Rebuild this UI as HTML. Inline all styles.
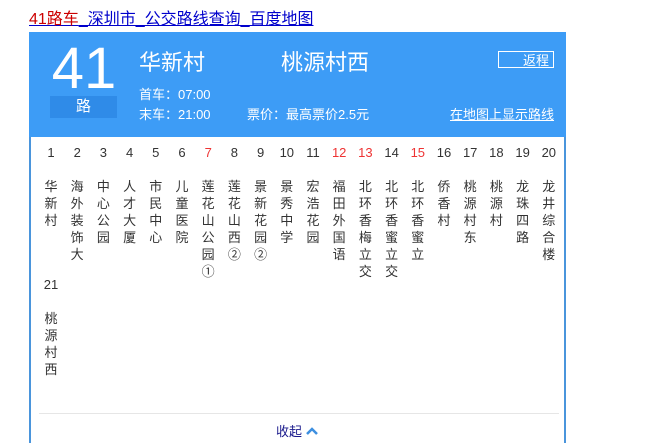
<!DOCTYPE html>
<html><head><meta charset="utf-8"><style>
html,body{margin:0;background:#fff;font-family:"Liberation Sans","Noto Sans CJK SC",sans-serif;width:669px;height:443px;overflow:hidden;position:relative}
.a{position:absolute}
.t{left:29px;top:5px;font-size:16px;text-decoration:underline;color:#00c}
.t span{color:#c00}
.panel{left:29px;top:32px;width:533px;height:411px;border:2px solid #4a95dc;border-top:none;border-bottom:none}
.hd{left:29px;top:32px;width:537px;height:105px;background:#3d9cf6;color:#fff}
.st{width:16px;font-size:13px;line-height:17px;color:#333;text-align:center}
</style></head><body>
<div class="a t"><span>41路车</span>_深圳市_公交路线查询_百度地图</div>
<div class="a panel"></div>
<div class="a hd">
 <div class="a" style="left:21px;top:2px;font-size:58px;line-height:70px;width:68px;text-align:center">41</div>
 <div class="a" style="left:21px;top:64px;width:67px;height:22px;background:#2f8be8;font-size:15px;text-align:center;line-height:22px">路</div>
 <div class="a" style="left:110px;top:13px;font-size:22px">华新村</div>
 <div class="a" style="left:252px;top:13px;font-size:22px">桃源村西</div>
 <div class="a" style="left:469px;top:19px;width:56px;height:17px;border:1px solid #fff;font-size:13px;text-align:right;line-height:17px;box-sizing:border-box;padding-right:4px">返程</div>
 <div class="a" style="left:110px;top:52px;font-size:13px">首车：07:00</div>
 <div class="a" style="left:110px;top:72px;font-size:13px">末车：21:00</div>
 <div class="a" style="left:218px;top:72px;font-size:13px">票价：最高票价2.5元</div>
 <div class="a" style="left:421px;top:72px;font-size:13px;text-decoration:underline">在地图上显示路线</div>
</div>
<div id="s"></div>
<div class="a" style="left:39px;top:413px;width:520px;height:1px;background:#e6e6e6"></div>
<div class="a" style="left:276px;top:421px;font-size:13px;color:#1a1a8c">收起 <svg width="12" height="8" viewBox="0 0 12 8" style="vertical-align:1px"><path d="M1 7L6 2L11 7" stroke="#3d8fe0" stroke-width="2.5" fill="none"/></svg></div>
<script>
var n=["华新村","海外装饰大","中心公园","人才大厦","市民中心","儿童医院","莲花山公园①","莲花山西②","景新花园②","景秀中学","宏浩花园","福田外国语","北环香梅立交","北环香蜜立交","北环香蜜立","侨香村","桃源村东","桃源村","龙珠四路","龙井综合楼","桃源村西"];
var red=[7,12,13,15],h="";
for(var i=0;i<21;i++){var x=i<20?51+i*26.2:51,y=i<20?145:277,c=red.indexOf(i+1)>=0;
h+='<div class="a" style="left:'+(x-12)+'px;top:'+y+'px;width:24px;text-align:center;font-size:13px;color:'+(c?'#e33':'#333')+'">'+(i+1)+'</div>';
h+='<div class="a st" style="left:'+(x-8)+'px;top:'+(y+33)+'px">'+n[i].split("").join("<br>")+'</div>';}
document.getElementById("s").innerHTML=h;
</script>
</body></html>
